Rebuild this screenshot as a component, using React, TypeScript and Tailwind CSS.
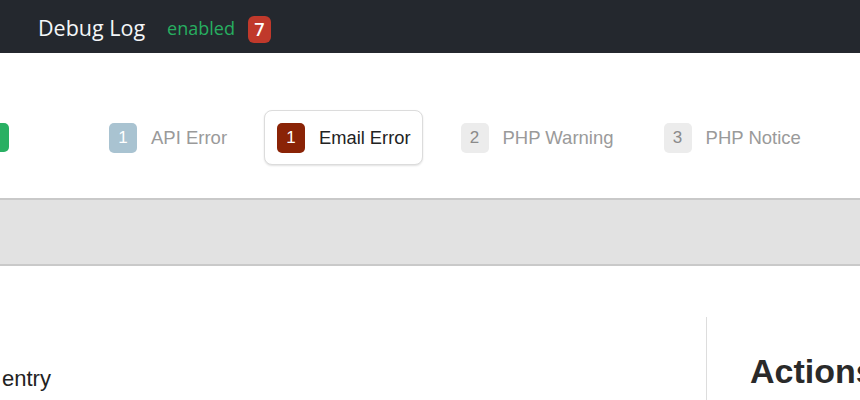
const tabs = [
  { count: 1, label: "API Error", badge: "bg-[#a9c3d1] text-white", active: false },
  { count: 1, label: "Email Error", badge: "bg-[#8a2306] text-white", active: true },
  { count: 2, label: "PHP Warning", badge: "bg-[#ececec] text-[#8a8a8a]", active: false },
  { count: 3, label: "PHP Notice", badge: "bg-[#ececec] text-[#8a8a8a]", active: false },
];

const App = () => {
  return (
    <div className="h-[400px] w-[860px] overflow-hidden bg-white font-['Liberation_Sans',Arial,sans-serif]">
      <header className="flex h-[53px] items-center bg-[#24282e] pl-[38px] font-['Open_Sans',sans-serif]">
        <span className="mt-[3px] text-[21.5px] text-[#f4f6f8]">Debug Log</span>
        <span className="ml-[22px] mt-[4px] text-[18px] text-[#27ae60]">enabled</span>
        <span className="ml-[13px] mt-[6px] flex h-[27px] w-[23px] items-center justify-center rounded-[6px] bg-[#c0392b] text-[18px] font-semibold text-white">
          7
        </span>
      </header>

      <nav className="mt-[57px] flex h-[55px] items-center">
        <div className="h-[29px] w-[9px] rounded-r-[5px] bg-[#29b063]" />
        <div className="ml-[87px] flex gap-[25px]">
          {tabs.map((tab) => (
            <div
              key={tab.label}
              className={
                tab.active
                  ? "flex h-[55px] items-center gap-[14px] rounded-[8px] border border-[#dcdcdc] bg-white pl-[12px] pr-[11px] shadow-[0_1px_2px_rgba(0,0,0,0.12)]"
                  : "flex h-[55px] items-center gap-[14px] rounded-[8px] border border-transparent pl-[12px] pr-[11px]"
              }
            >
              <span
                className={`flex h-[30px] w-[28px] items-center justify-center rounded-[5px] text-[17px] ${tab.badge}`}
              >
                {tab.count}
              </span>
              <span
                className={
                  tab.active
                    ? "text-[18.3px] text-[#222222]"
                    : "text-[18.5px] text-[#9a9a9a]"
                }
              >
                {tab.label}
              </span>
            </div>
          ))}
        </div>
      </nav>

      <div className="mt-[33px] h-[68px] border-y-2 border-[#c9c9c9] bg-[#e2e2e2]" />

      <section className="mt-[51px] flex">
        <div className="w-[706px] shrink-0 pt-[49px]">
          <p className="pl-[2px] text-[22px] leading-[1.2] text-[#222222]">entry</p>
        </div>
        <div className="h-[120px] shrink-0 border-l border-[#dddddd] pl-[43px] pt-[34px]">
          <h2 className="whitespace-nowrap text-[34px] font-bold leading-[1.2] text-[#2a2a2a]">
            Actions
          </h2>
        </div>
      </section>
    </div>
  );
};

export default App;
